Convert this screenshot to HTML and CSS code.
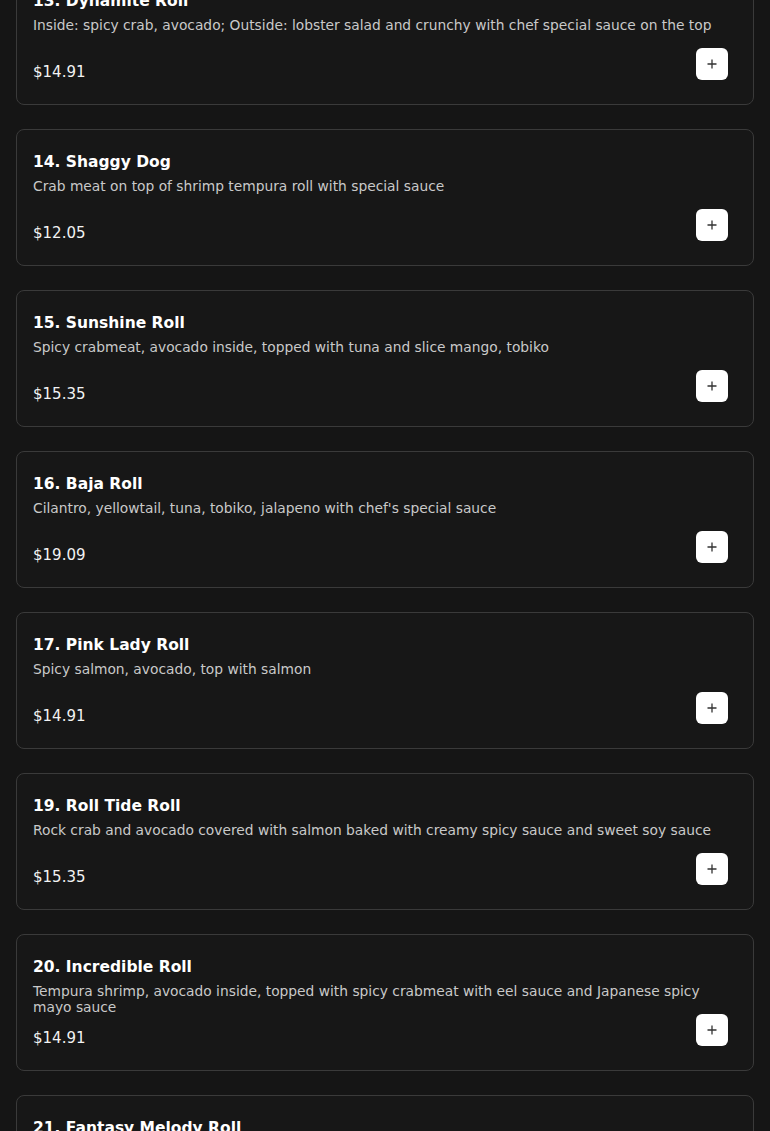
FILE: index.html
```html
<!DOCTYPE html>
<html lang="en">
<head>
<meta charset="utf-8">
<title>Menu</title>
<link rel="stylesheet" href="styles.css">
</head>
<body>
<main class="list">
  <article class="card">
    <h3 class="name">13. Dynamite Roll</h3>
    <p class="desc">Inside: spicy crab, avocado; Outside: lobster salad and crunchy with chef special sauce on the top</p>
    <div class="price">$14.91</div>
    <button class="add" aria-label="Add"><svg viewBox="0 0 12 12" width="12" height="12"><path d="M6 1.5v9M1.5 6h9" stroke="#333" stroke-width="1.3" fill="none"/></svg></button>
  </article>
  <article class="card">
    <h3 class="name">14. Shaggy Dog</h3>
    <p class="desc">Crab meat on top of shrimp tempura roll with special sauce</p>
    <div class="price">$12.05</div>
    <button class="add" aria-label="Add"><svg viewBox="0 0 12 12" width="12" height="12"><path d="M6 1.5v9M1.5 6h9" stroke="#333" stroke-width="1.3" fill="none"/></svg></button>
  </article>
  <article class="card">
    <h3 class="name">15. Sunshine Roll</h3>
    <p class="desc">Spicy crabmeat, avocado inside, topped with tuna and slice mango, tobiko</p>
    <div class="price">$15.35</div>
    <button class="add" aria-label="Add"><svg viewBox="0 0 12 12" width="12" height="12"><path d="M6 1.5v9M1.5 6h9" stroke="#333" stroke-width="1.3" fill="none"/></svg></button>
  </article>
  <article class="card">
    <h3 class="name">16. Baja Roll</h3>
    <p class="desc">Cilantro, yellowtail, tuna, tobiko, jalapeno with chef's special sauce</p>
    <div class="price">$19.09</div>
    <button class="add" aria-label="Add"><svg viewBox="0 0 12 12" width="12" height="12"><path d="M6 1.5v9M1.5 6h9" stroke="#333" stroke-width="1.3" fill="none"/></svg></button>
  </article>
  <article class="card">
    <h3 class="name">17. Pink Lady Roll</h3>
    <p class="desc">Spicy salmon, avocado, top with salmon</p>
    <div class="price">$14.91</div>
    <button class="add" aria-label="Add"><svg viewBox="0 0 12 12" width="12" height="12"><path d="M6 1.5v9M1.5 6h9" stroke="#333" stroke-width="1.3" fill="none"/></svg></button>
  </article>
  <article class="card">
    <h3 class="name">19. Roll Tide Roll</h3>
    <p class="desc">Rock crab and avocado covered with salmon baked with creamy spicy sauce and sweet soy sauce</p>
    <div class="price">$15.35</div>
    <button class="add" aria-label="Add"><svg viewBox="0 0 12 12" width="12" height="12"><path d="M6 1.5v9M1.5 6h9" stroke="#333" stroke-width="1.3" fill="none"/></svg></button>
  </article>
  <article class="card">
    <h3 class="name">20. Incredible Roll</h3>
    <p class="desc">Tempura shrimp, avocado inside, topped with spicy crabmeat with eel sauce and Japanese spicy mayo sauce</p>
    <div class="price">$14.91</div>
    <button class="add" aria-label="Add"><svg viewBox="0 0 12 12" width="12" height="12"><path d="M6 1.5v9M1.5 6h9" stroke="#333" stroke-width="1.3" fill="none"/></svg></button>
  </article>
  <article class="card">
    <h3 class="name">21. Fantasy Melody Roll</h3>
    <p class="desc">Spicy tuna, avocado inside, topped with salmon and tuna</p>
    <div class="price">$15.35</div>
    <button class="add" aria-label="Add"><svg viewBox="0 0 12 12" width="12" height="12"><path d="M6 1.5v9M1.5 6h9" stroke="#333" stroke-width="1.3" fill="none"/></svg></button>
  </article>
</main>
</body>
</html>
```
FILE: styles.css
```css
html, body {
  margin: 0;
  padding: 0;
  background: #151515;
}
body {
  font-family: "DejaVu Sans", "Open Sans", sans-serif;
  color: #ffffff;
  overflow: hidden;
}
.list {
  display: flex;
  flex-direction: column;
  gap: 24px;
  padding: 0 16px;
  margin-top: -32px;
}
.card {
  display: grid;
  grid-template-columns: 1fr auto;
  background: #171717;
  border: 1px solid #3a3a3a;
  border-radius: 8px;
  padding: 16px 16px 18px 16px;
}
.name {
  grid-column: 1 / -1;
  margin: 0;
  padding-top: 2px;
  font-size: 15.5px;
  font-weight: 700;
  line-height: 28px;
  color: #ffffff;
}
.desc {
  grid-column: 1 / -1;
  margin: 2px 0 0;
  padding-right: 10px;
  font-size: 13.8px;
  line-height: 16px;
  min-height: 32px;
  color: #c9c9c9;
}
.price {
  margin-top: 9px;
  font-size: 15px;
  line-height: 28px;
  color: #f2f2f2;
}
.add {
  align-self: end;
  margin: -10px 9px 6px 0;
  width: 32px;
  height: 32px;
  border: 0;
  border-radius: 6px;
  background: #ffffff;
  display: flex;
  align-items: center;
  justify-content: center;
  padding: 0;
}
.add svg {
  display: block;
}
```
